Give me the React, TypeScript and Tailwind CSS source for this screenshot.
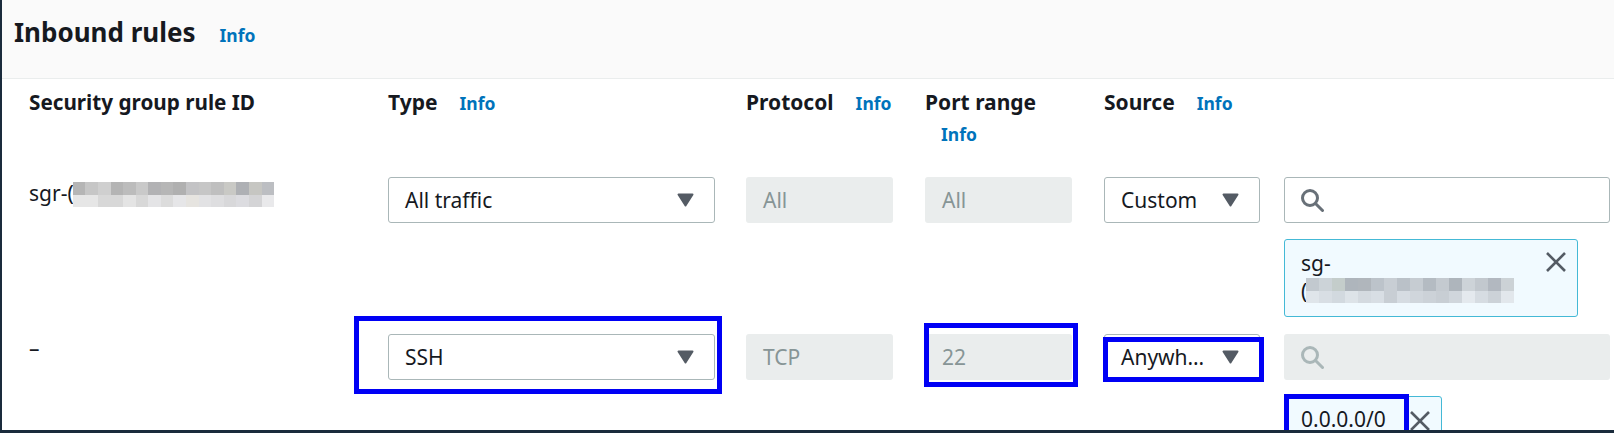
const ruleBlur = [
  ['#b5b5b5', '#c6c6c6', '#cfcfcf', '#b4b4b4', '#bcbcbc', '#c9c9c9', '#b2b2b4', '#b6b6b6', '#b0b0b0', '#c3c3c5', '#c6c6c6', '#bfbfbf', '#c9c9c5', '#aeb0b4', '#c6c6c2', '#bcbec2'],
  ['#e6e6e6', '#e6e6e6', '#d8d8d8', '#d8d8d8', '#e4e4e4', '#d8d8d8', '#e4e4e6', '#dcdcdc', '#e6e6e8', '#e6e4e0', '#e2e2e4', '#dedee0', '#d8d8da', '#dcdce0', '#d4d4d6', '#e9e9eb'],
];

const tokenBlur = [
  ['#c2c9cf', '#ccd3d8', '#c4cdcb', '#aeb5bc', '#b0b6bc', '#bcc3ca', '#c8ced4', '#bac1c8', '#c6ccd2', '#b4bbc2', '#c4cad0', '#aeb5bc', '#cdd3d8', '#c2c8ce', '#b2b8c0', '#ccd2d6'],
  ['#dfe5ea', '#d8dee4', '#d2d9df', '#dde3e8', '#d4dae0', '#d8dee4', '#c8ced4', '#d6dce2', '#d0d6dc', '#ccd2d8', '#c8ced4', '#d0d6dc', '#e4e9ee', '#d6dce2', '#ccd2d8', '#e2e7ec'],
];

const Blur = ({ rows, cell }: { rows: string[][]; cell: string }) => (
  <div className="flex flex-col">
    {rows.map((row, i) => (
      <div key={i} className="flex">
        {row.map((c, j) => (
          <span key={j} className={`h-[12.5px] shrink-0 ${cell}`} style={{ backgroundColor: c }} />
        ))}
      </div>
    ))}
  </div>
);

const Info = ({ className = '' }: { className?: string }) => (
  <span className={`text-[17.5px] font-bold leading-[24px] text-[#0073bb] ${className}`}>Info</span>
);

const Caret = () => (
  <svg width="17" height="14" viewBox="0 0 17 14" className="shrink-0">
    <path d="M1.5 1.5h14L8.5 12.5z" fill="#545b64" stroke="#545b64" strokeWidth="2" strokeLinejoin="round" />
  </svg>
);

const SearchIcon = ({ color = '#687078' }: { color?: string }) => (
  <svg width="24" height="24" viewBox="0 0 24 24" fill="none" stroke={color} strokeWidth="3">
    <circle cx="10" cy="10" r="7.5" />
    <path d="M15.5 15.5L22.5 22.5" strokeLinecap="round" />
  </svg>
);

const CloseIcon = () => (
  <svg width="20" height="20" viewBox="0 0 20 20" fill="none" stroke="#545b64" strokeWidth="2.6">
    <path d="M1 1l18 18M19 1L1 19" />
  </svg>
);

const Select = ({ label, className = '' }: { label: string; className?: string }) => (
  <div className={`flex h-[46px] items-center justify-between rounded-[3px] border border-[#aab7b8] bg-white pl-[16px] pr-[20px] text-[#16191f] ${className}`}>
    <span>{label}</span>
    <Caret />
  </div>
);

const Disabled = ({ label }: { label: string }) => (
  <div className="flex h-[46px] w-[147px] items-center rounded-[3px] bg-[#eaeded] pl-[17px] text-[#879596]">{label}</div>
);

const Highlight = ({ className }: { className: string }) => (
  <div className={`pointer-events-none absolute border-[5px] border-[#0000f5] ${className}`} />
);

export default function App() {
  return (
    <div className="h-[433px] w-[1614px] overflow-hidden border-b-[3px] border-l-2 border-[#1a2b3c] bg-white text-[21px] leading-[28px] text-[#16191f] [font-family:'Noto_Sans',sans-serif]">
      <div className="flex h-[79px] items-baseline gap-[24px] border-b border-[#eaeded] bg-[#fafafa] pl-[12px] pt-[14px]">
        <h2 className="text-[26px] font-bold leading-[36px]">Inbound rules</h2>
        <Info />
      </div>

      <div className="grid grid-cols-[359px_358px_179px_179px_180px_326px] pl-[27px]">
        <div className="h-[98px] pt-[9px] text-[20.7px] font-bold">Security group rule ID</div>
        <div className="flex h-[98px] items-start gap-[22px] pt-[9px] font-bold">
          <span>Type</span>
          <Info className="mt-[3px]" />
        </div>
        <div className="flex h-[98px] items-start gap-[22px] pt-[9px] font-bold">
          <span>Protocol</span>
          <Info className="mt-[3px]" />
        </div>
        <div className="h-[98px] pt-[9px] font-bold">
          <div>Port range</div>
          <Info className="ml-[16px] mt-[6px] block" />
        </div>
        <div className="flex h-[98px] items-start gap-[22px] pt-[9px] font-bold">
          <span>Source</span>
          <Info className="mt-[3px]" />
        </div>
        <div />

        {/* existing rule */}
        <div className="flex h-[157px] items-start pt-[2px]">
          <span>sgr-(</span>
          <div className="-ml-[1px] mt-[3px]">
            <Blur rows={ruleBlur} cell="w-[12.6px]" />
          </div>
        </div>
        <div className="w-[327px]">
          <Select label="All traffic" />
        </div>
        <Disabled label="All" />
        <Disabled label="All" />
        <Select label="Custom" className="w-[156px]" />
        <div>
          <div className="flex h-[46px] w-[326px] items-center rounded-[3px] border border-[#aab7b8] bg-white pl-[15px]">
            <SearchIcon />
          </div>
          <div className="mt-[16px] flex h-[78px] w-[294px] justify-between rounded-[3px] border border-[#44b9d6] bg-[#f1faff] pl-[16px] pr-[11px] pt-[9px]">
            <div>
              <div>sg-</div>
              <div className="flex">
                <span>(</span>
                <div className="-ml-[1px] mt-[1px]">
                  <Blur rows={tokenBlur} cell="w-[13px]" />
                </div>
              </div>
            </div>
            <div className="pt-[3px]">
              <CloseIcon />
            </div>
          </div>
        </div>

        {/* new rule */}
        <div>–</div>
        <div className="relative w-[327px]">
          <Select label="SSH" />
          <Highlight className="-left-[34px] -right-[7px] -top-[18px] h-[78px]" />
        </div>
        <Disabled label="TCP" />
        <div className="relative">
          <Disabled label="22" />
          <Highlight className="-left-[1px] -top-[11px] h-[64px] w-[154px]" />
        </div>
        <div className="relative">
          <Select label="Anywh…" className="w-[156px]" />
          <Highlight className="-left-[1px] top-[3px] h-[45px] w-[161px]" />
        </div>
        <div>
          <div className="flex h-[46px] w-[326px] items-center rounded-[3px] bg-[#eaeded] pl-[16px]">
            <SearchIcon color="#aab7b8" />
          </div>
          <div className="relative mt-[16px] flex h-[78px] w-[158px] justify-between rounded-[3px] border border-[#44b9d6] bg-[#f1faff] pl-[16px] pr-[11px] pt-[8px]">
            <span>0.0.0.0/0</span>
            <div className="pt-[6px]">
              <CloseIcon />
            </div>
            <Highlight className="-left-px -top-[3px] h-[60px] w-[125px]" />
          </div>
        </div>
      </div>
    </div>
  );
}
